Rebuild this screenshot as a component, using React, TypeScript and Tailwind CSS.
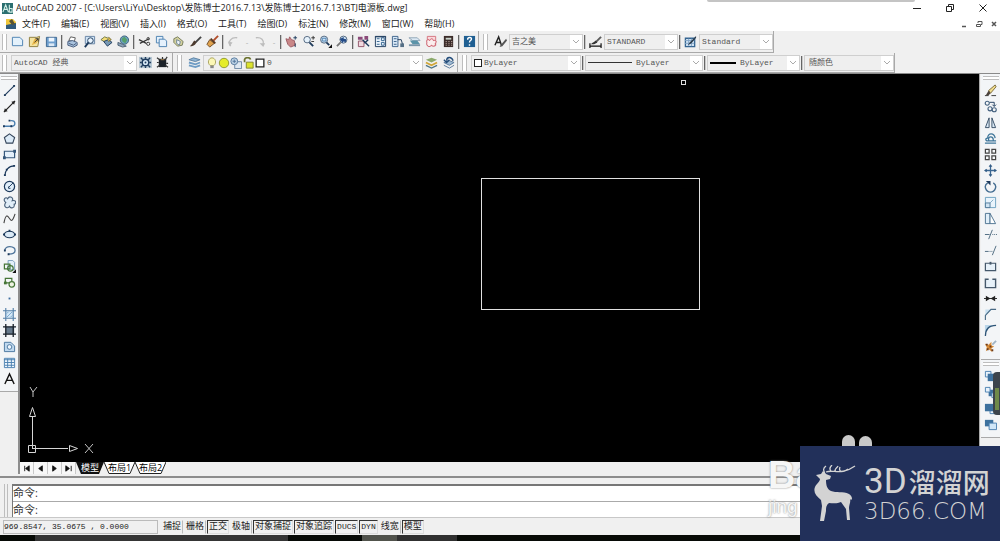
import type { ReactNode } from "react";

const INK = "#1d3a5c";
const BLUE = "#4a7fb0";
const PALE = "#cfe3f5";

// every glyph is drawn on a 14 x 14 grid
const icons: Record<string, ReactNode> = {
    new: <path d="M1.5 2.5h8l3 3v6h-11z" fill="#e4f1fb" stroke={BLUE} />,
    open: <><path d="M1.500 2.500h8l3 -1-2 11h-9z" fill="#f4e3a0" stroke="#8a7a3a" /><path d="M4 11l3-7h5l-3 5z" fill="#eab84a" /><path d="M7 8l4-4M8 4h3v3" stroke="#333" /></>,
    save: <><path d="M1.500 2.500h11v10h-11z" fill="#6f9fce" stroke="#3a658f" /><path d="M4 3h6v4H4z" fill="#eef6ff" /><path d="M4 9h6v3H4z" fill="#dbe8f5" /></>,
    print: <><path d="M3 6l2-4 5 1-1 4z" fill="#fff" stroke="#555" /><path d="M2 7l5-1 5 2v3l-4 2-6-2z" fill="#a9c3de" stroke="#44597a" /><path d="M3 9l5 2 3-2" stroke="#44597a" /></>,
    preview: <><path d="M2.500 1.500h10v8h-10z" fill={PALE} stroke="#6783a3" /><circle cx="8" cy="6" r="3" fill="#eaf5ff" stroke={INK} /><path d="M6 8l-4 5" stroke={INK} strokeWidth="2" /></>,
    publish: <><path d="M1 5l4-3 5 2-4 4z" fill="#f4dd77" stroke="#6b7444" /><path d="M4 7l5-2 4 3-5 4z" fill="#7899b5" stroke={INK} /><path d="M9 2l3 3-3 2" fill="#e7c14b" stroke="#6d652d" /></>,
    web: <><circle cx="8" cy="5.500" r="4.500" fill="#6aa0bd" stroke="#3d617b" /><path d="M5 4l3-2 3 3-2 4-3-2z" fill="#56a06a" /><path d="M1 8l5 2 4 2-4 1-5-2z" fill="#8da4b9" stroke="#4d6072" /></>,
    cut: <><path d="M1 5l8 4M2 9l10-5" stroke="#333" strokeWidth="1.300" /><circle cx="11" cy="9.500" r="1.700" fill="none" stroke="#333" /><circle cx="11" cy="4" r="1.300" fill="none" stroke="#333" /></>,
    copy: <><path d="M1.500 1.500h7v7h-7z" fill="#e5f1fc" stroke={BLUE} /><path d="M4.500 4.500h6l2 2v6h-8z" fill="#e5f1fc" stroke={BLUE} /></>,
    paste: <><path d="M2 4l4-2 6 5-1 4-5 1-4-4z" fill="#d6d3a0" stroke="#72795a" /><path d="M5 5l4 2-1 4-3-2z" fill="#eef4fa" stroke="#6d8294" /></>,
    brush: <><path d="M13 2L7 8" stroke="#444" strokeWidth="2" /><path d="M1 12c2 0 5 0 7-4L6 6c-2 1-2 4-5 6z" fill="#4c3a2e" /></>,
    paint: <><path d="M13 1L8 6" stroke="#b14d2a" strokeWidth="2" /><path d="M4 5l5 4-5 4-3-3z" fill="#e0a24c" stroke="#6d4a26" /><path d="M5 4l5 5" stroke="#5a3820" strokeWidth="2" /></>,
    undo: <><path d="M4 12C0 7 5 2 11 3" fill="none" stroke="#bdbdbd" strokeWidth="1.500" /><path d="M1 7l5 1-3 4z" fill="#bdbdbd" /></>,
    redo: <><path d="M2 3c6-1 9 3 8 7" fill="none" stroke="#bdbdbd" strokeWidth="1.500" /><path d="M6 9l6 0-2 4z" fill="#bdbdbd" /></>,
    pan: <><path d="M1 4l3 1 1-3 2 3 3 1 1 5-5 2-3-3z" fill="#c98788" stroke="#9a5a62" /><path d="M11 1v4M9 3h4M11 9v4" stroke={INK} /></>,
    zoom: <><circle cx="5.500" cy="5" r="3.500" fill="#e6f2fc" stroke="#50657c" /><path d="M8 8l4 4" stroke={INK} strokeWidth="2" /><path d="M10 3h4M12 1v4M10 7h3" stroke="#333" /></>,
    zoomWindow: <><circle cx="5.500" cy="5" r="3.800" fill={PALE} stroke="#50657c" /><path d="M3.500 3.500h4v3h-4z" fill="none" stroke={BLUE} /><path d="M8 8l3 3" stroke={INK} strokeWidth="2" /><path d="M14 10v4h-4z" fill="#111" /></>,
    zoomPrevious: <><circle cx="8" cy="5" r="3.800" fill={PALE} stroke="#50657c" /><path d="M5 8l-4 4" stroke="#777" strokeWidth="2" /><path d="M5 3h3V1l4 4-4 3V6H5z" fill="#234a86" transform="rotate(190 8 5)" /></>,
    properties: <><path d="M1 2h5v3H1zM8 1h4v4H8z" fill="#8c4b7a" /><path d="M1.500 6.500h6v6h-6z" fill="#f0d9df" stroke="#905368" /><path d="M6 5l7 7M8 9l4-4" stroke={INK} strokeWidth="1.500" /></>,
    designCenter: <><path d="M1.500 1.500h11v11h-11z" fill="#eaf3fb" stroke={INK} /><path d="M3 4h3M3 7h3M3 10h3M8 3v3h3V3zM8 8v3h3V8z" fill="none" stroke="#35648f" /><path d="M1 2h12" stroke={INK} /></>,
    palettes: <><path d="M1.500 1.500h6v11h-6z" fill="#d8e8f7" stroke="#3b6189" /><path d="M3 4h3M3 7h3M3 10h3" stroke="#3b6189" /><path d="M7 5h4l2 7" fill="none" stroke={INK} /><path d="M10 9h4v4h-4z" fill="#556f86" /></>,
    sheets: <><path d="M1 3h9l3 3H5z" fill="#dce9f4" stroke="#8fa3b5" /><path d="M2 6l8 0 3 4H5z" fill="#5b93a8" /><path d="M1 11h12" stroke="#7a95a9" strokeWidth="2" /></>,
    markup: <><path d="M2.500 1.500h9v10h-9z" fill="#f9d9dc" stroke="#d4737d" /><path d="M2 8c-1-3 2-4 3-2 1-3 4-2 4 0 3-1 4 2 2 3 1 3-2 4-4 2-2 3-6 1-5-3z" fill="#fbeeee" stroke="#c84f5e" /></>,
    calc: <><path d="M2 1h10v12H2z" fill="#3c2d2a" /><path d="M4 3h6v2H4z" fill="#c9d2ca" /><path d="M4 7h1M7 7h1M10 7h1M4 9h1M7 9h1M10 9h1M4 11h1M7 11h1M10 11h1" stroke="#e0c8c0" /></>,
    help: <><path d="M1 1h12v12H1z" fill="#1f5f92" /><path d="M5 5c0-3 5-3 4 0-1 1-2 1-2 3M7 10v1.500" fill="none" stroke="#fff" strokeWidth="1.500" /></>,
    textStyle: <><path d="M1 11L5 2l3 9M3 8h4" fill="none" stroke="#222" strokeWidth="1.500" /><path d="M13 4L7 11l-1 2 3-1 5-6z" fill="#555" /></>,
    dimStyle: <><path d="M13 2L7 8" stroke="#5c5c5c" strokeWidth="2" /><path d="M2 10c3 0 4 0 7-2L7 6c-1 2-3 2-5 4z" fill="#333" /><path d="M1 12h12M1 9v5M13 9v5" stroke="#111" strokeWidth="1.300" /></>,
    tableStyle: <><path d="M1.500 3.500h10v9h-10z" fill="#cfe1f2" stroke="#356591" strokeWidth="1.400" /><path d="M1 6h10M5 4v8M8 4v8M1 9h10" stroke="#7ea3c6" /><path d="M13 1L6 8l-2 3 4-2 5-6z" fill="#2b3c4c" /></>,
    gear: <><path d="M0 1h14v12H0z" fill="#b9c9d4" /><circle cx="7" cy="7" r="3.500" fill="#d7e8f6" stroke={INK} strokeWidth="1.500" /><path d="M7 1v2M7 11v2M1 7h2M11 7h2M2 2l2 2M12 2l-2 2M2 12l2-2M12 12l-2-2" stroke={INK} strokeWidth="1.500" /><circle cx="7" cy="7" r="1" fill={INK} /></>,
    workspace: <><path d="M3 3h8v9H3z" fill="#1c2228" /><path d="M1 2l3 2M12 1l-2 3M1 7h2M11 8h2M1 12l3-2M13 12l-3-2M7 1v3" stroke="#333" strokeWidth="1.300" /><path d="M5 4h4" stroke="#b78a52" /></>,
    layers: <><path d="M1 4l5-2 7 2-5 2z" fill="#8db4d6" stroke="#5b7f9f" /><path d="M1 7l7 2 5-2M1 10l7 2 5-2" fill="none" stroke="#6f9cc4" strokeWidth="2" /></>,
    layerState: <><path d="M1 4l6-2 6 2-6 3z" fill="#8ba96b" /><path d="M1 7l6 3 6-3" fill="none" stroke="#d0a637" strokeWidth="2" /><path d="M1 10l6 3 6-3" fill="none" stroke="#4f7688" strokeWidth="1.500" /></>,
    layerPrevious: <><path d="M2 7l6-2 5 2-5 3z" fill="#9dbad3" stroke="#58789a" /><path d="M2 10l6 3 5-3" fill="none" stroke="#58789a" /><path d="M12 5C10 0 5 1 5 5M2 4l3 3 3-3" fill="none" stroke="#244d7b" strokeWidth="1.500" /></>,
    bulb: <><path d="M5 10C1 7 3 1 7 1s6 6 2 9z" fill="#fbf7b6" stroke="#a19b54" /><path d="M5 10h4v3H5z" fill="#888" /></>,
    sun: <circle cx="7" cy="7" r="5.500" fill="#e5ec2b" stroke="#88912e" />,
    sunViewport: <><path d="M5.500 5.500h8v8h-8z" fill="#e0e9f2" stroke="#607c9a" /><circle cx="5" cy="5" r="4" fill="#bcd1e3" stroke="#4e7399" /><path d="M3 5h4M5 3v4" stroke="#4e7399" /></>,
    lock: <><path d="M3 6V3c1-3 6-3 7 0" fill="none" stroke="#6c7330" strokeWidth="2" /><path d="M5 6h8v7H5z" fill="#dce22d" stroke="#7a7d2c" /></>,
    line: <><path d="M2 12L12 2" stroke={INK} strokeWidth="1.200" /><path d="M1 11h2v2H1zM11 1h2v2h-2z" fill={INK} /></>,
    xline: <><path d="M1 13L13 1" stroke="#222" strokeWidth="1.300" /><path d="M1 13l4-1-3-3zM13 1L9 2l3 3z" fill="#222" /></>,
    polyline: <><path d="M1 11h8c5 0 5-6 0-6H8" fill="none" stroke={BLUE} strokeWidth="1.500" /><path d="M0 10h2v2H0zM8 10h2v2H8zM6 4h2v2H6z" fill={INK} /></>,
    polygon: <path d="M7 2l5.500 4-2 6h-7l-2-6z" fill="#dcebf8" stroke="#34455a" strokeWidth="1.200" />,
    rectangle: <><path d="M1.500 3.500h11v7h-11z" fill="#e3effa" stroke="#34577b" strokeWidth="1.300" /><path d="M0 9h3v3H0zM11 2h3v3h-3z" fill="#34577b" /></>,
    arc: <><path d="M2 13C2 7 6 2 12 2" fill="none" stroke={INK} strokeWidth="1.200" /><path d="M1 11h2v2H1zM3 5h2v2H3zM11 1h2v2h-2z" fill={INK} /></>,
    circle: <><circle cx="7" cy="7" r="5.500" fill="#dfedf9" stroke={INK} strokeWidth="1.300" /><path d="M6 8l5-5M6 7v2h2" stroke={INK} fill="none" /></>,
    revcloud: <path d="M3 7C-1 4 3 0 5 3c2-4 7-1 5 2 5-1 4 4 2 4 1 4-4 5-5 2-3 4-7 0-4-4z" fill="#e0edf8" stroke="#4a617a" strokeWidth="1.200" />,
    spline: <path d="M1 12C3 1 5 4 7 7s3 4 6-5" fill="none" stroke="#444" strokeWidth="1.200" />,
    ellipse: <><ellipse cx="7" cy="7" rx="5.500" ry="3.500" fill="#dbeaf7" stroke={INK} strokeWidth="1.300" /><path d="M0 6h2v2H0zM12 6h2v2h-2zM6 2h2v2H6z" fill={INK} /></>,
    ellipseArc: <><path d="M2 7c0-6 11-5 11 0 0 3-4 4-7 4" fill="none" stroke="#50759b" strokeWidth="1.400" /><path d="M1 6h2v2H1zM5 10h2v2H5z" fill={INK} /></>,
    insertBlock: <><path d="M5.500.500h5l2 2v8h-7z" fill="#e1effa" stroke="#779bbb" /><path d="M1.500 4.500h6v5h-6z" fill="none" stroke="#457536" strokeWidth="1.300" /><circle cx="8" cy="9" r="3" fill="none" stroke="#457536" strokeWidth="1.300" /><path d="M14 10v4h-4z" fill="#111" /></>,
    makeBlock: <><path d="M2.500 2.500h7v5h-7z" fill="none" stroke="#457536" strokeWidth="1.300" /><circle cx="9.500" cy="9" r="3" fill="#eef3e2" stroke="#457536" strokeWidth="1.300" /><path d="M1 6h3v3H1z" fill="#457536" /></>,
    point: <path d="M6 6h2v2H6z" fill="#3b6c9e" />,
    hatch: <><path d="M2.500 3.500h9v7h-9z" fill="#d3e7f7" /><path d="M3 0v14M11 0v14M0 3h14M0 11h14" stroke="#537fa8" strokeWidth="1.200" /><path d="M4 10l6-6M4 6l2-2M8 10l2-2" stroke="#76a5cb" /></>,
    gradient: <><path d="M3 3h9v8H3z" fill="#66798b" /><path d="M3 0v14M11 0v14M0 3h14M0 11h14" stroke="#171f28" strokeWidth="1.400" /></>,
    region: <><path d="M1.500 2.500h7l4 4v6h-11z" fill="#c0d9ef" stroke="#47759e" /><circle cx="7" cy="7.500" r="2.500" fill="#eff7ff" stroke="#47759e" /></>,
    table: <><path d="M1.500 2.500h11v10h-11z" fill="#eef6fd" stroke={BLUE} /><path d="M1 4h12M5 3v9M9 3v9M2 7h10M2 10h10" stroke={BLUE} /></>,
    text: <path d="M2 13L7 2l5 11M4 9h6" fill="none" stroke="#111" strokeWidth="1.500" />,
    erase: <><path d="M12 1L5 7l2 3 6-7z" fill="#f0dc8c" stroke="#7a6a3c" /><path d="M5 7l2 3-2 2H2z" fill="#4c423a" /><path d="M1 12.500h4M8 12.500h5" stroke="#333" /></>,
    copyObject: <><circle cx="3.500" cy="3.500" r="2.200" fill="none" stroke="#44617f" strokeWidth="1.200" /><circle cx="6.500" cy="9.500" r="2.200" fill="none" stroke="#44617f" strokeWidth="1.200" /><circle cx="11" cy="10.500" r="2.200" fill="none" stroke="#44617f" strokeWidth="1.200" /><path d="M6 2.500h5v4M9 5l2 2 2-2" fill="none" stroke={INK} /></>,
    mirror: <path d="M5.500 2v10.500h-4zM8.500 2v10.500h4z" fill="#dcebf8" stroke="#344b62" />,
    offset: <path d="M1 12h12M13 9.500H3c-2-1-1-3 1-3 0-6 7-6 8 0M5 9c-1-5 5-5 5 0" fill="none" stroke="#3e7599" strokeWidth="1.400" />,
    array: <path d="M1.500 1.500h4v4h-4zM8.500 1.500h4v4h-4zM1.500 8.500h4v4h-4zM8.500 8.500h4v4h-4z" fill="#f7fafc" stroke="#444" strokeWidth="1.300" />,
    move: <><path d="M7 1v12M1 7h12" stroke="#3b6792" strokeWidth="1.400" /><path d="M7 0l2 3H5zM7 14l2-3H5zM0 7l3-2v4zM14 7l-3-2v4z" fill="#315b85" /></>,
    rotate: <><path d="M4 3C-1 6 2 13 7 13s8-7 3-10" fill="none" stroke="#456e92" strokeWidth="1.500" /><path d="M2 1h5v5z" fill={INK} /></>,
    scale: <><path d="M1.500 1.500h11v11h-11z" fill="#e9f4fc" stroke="#6ba0bf" /><path d="M1.500 7.500h5v5h-5z" fill="#d0e4f3" stroke="#4e7796" /><path d="M6 8l4-4" stroke="#7fa7c1" /></>,
    stretch: <><path d="M1.500 1.500h5v11h-5z" fill="#e1eff9" stroke="#4c7190" /><path d="M6.500 1.500l6 11h-6z" fill="#fff" stroke="#4c7190" /></>,
    trim: <path d="M1 7h5M9 7h1M11 7h1M13 7h1M5 12L9 2" stroke="#49677c" />,
    extend: <path d="M1 8h4M6 8h1M8 8h1M9 12l4-10" stroke="#49677c" />,
    breakPoint: <><path d="M1.500 3.500h11v8h-11z" fill="#e7f1f9" stroke="#45586b" strokeWidth="1.300" /><path d="M6 2h2v3H6z" fill="#45586b" /></>,
    breakObject: <path d="M5 3.500H1.500v9h11v-9H9" fill="#e7f1f9" stroke="#45586b" strokeWidth="1.500" />,
    join: <><path d="M0 7h14" stroke="#222" /><path d="M2 4l5 3-5 3zM12 4L7 7l5 3z" fill="#222" /></>,
    chamfer: <><path d="M1.500 1.500h7l-7 7z" fill="#c7dfef" /><path d="M1.500 13V8l6-6.500H13" fill="none" stroke="#496a85" strokeWidth="1.200" /></>,
    fillet: <><path d="M1 1h8L1 9z" fill="#b9d5e9" /><path d="M1.500 13C1.500 6 5 1.500 13 1.500" fill="none" stroke="#2e5577" strokeWidth="1.400" /></>,
    explode: <><path d="M1 4l4 1 3-3v4l3 1-3 2 1 4-4-3-3 2 1-4z" fill="#d88b36" /><path d="M2 4h2v2H2zM6 6h2v2H6zM3 9h2v2H3zM8 10h2v2H8z" fill="#6b3c1e" /><path d="M9 5l4-4" stroke="#9fb4c5" strokeWidth="2" /></>,
    front: <><path d="M1.500 1.500h6v6h-6z" fill="#e8f2fb" stroke={BLUE} /><path d="M4 4h9v8H4z" fill="#3d719e" /></>,
    back: <><path d="M5 4h8v7H5z" fill="#3d719e" /><path d="M1.500 1.500h5v5h-5zM8.500 7.500h5v5h-5z" fill="#e8f2fb" stroke={BLUE} /></>,
    above: <><path d="M6.500 6.500h7v6h-7z" fill="#e8f2fb" stroke={BLUE} /><path d="M1 2h10v8H1z" fill="#3d719e" /></>,
    under: <><path d="M1 2h9v7H1z" fill="#3d719e" /><path d="M5.500 5.500h8v7h-8z" fill="#cfe6f8" stroke={BLUE} /></>,
    square: <path d="M2.500 2.500h9v9h-9z" fill="#fff" stroke="#222" strokeWidth="1.500" />,
};

const Icon = ({ name, className = "size-3" }: { name: string; className?: string }) => (
    <svg viewBox="0 0 14 14" fill="none" className={`${className} shrink-0`} aria-hidden="true">
        {icons[name]}
    </svg>
);

const ToolButton = ({ name }: { name: string }) => (
    <button type="button" aria-label={name} className="flex h-4 w-[17px] shrink-0 items-center justify-center">
        <Icon name={name} className="size-[13px]" />
    </button>
);

const Separator = () => <span className="mx-px h-[14px] w-[2px] shrink-0 border-l border-[#666] bg-[#c9c9c9]" />;

const Grip = () => <span className="mr-1 h-4 w-[5px] shrink-0 border-x border-[#bdbdbd] bg-white" />;

const Caret = () => <span className="w-[10px] shrink-0 text-center text-[8px] text-[#aaa]">-</span>;

const Bar = ({ children }: { children: ReactNode }) => (
    <div className="flex h-full shrink-0 items-center border-r border-b border-[#a9a9a9] pl-1">{children}</div>
);

type ComboProps = { label: string; value: string; className: string; leading?: ReactNode };

const Combo = ({ label, value, className, leading }: ComboProps) => (
    <div className={`flex h-4 shrink-0 items-center border border-[#cfcfcf] bg-[#efefef] pl-[2px] ${className}`}>
        {leading}
        <select
            aria-label={label}
            className="h-full min-w-0 flex-1 appearance-none bg-transparent font-['Liberation_Mono','Noto_Sans_CJK_SC',monospace] text-[8px] text-[#555] outline-none"
        >
            <option>{value}</option>
        </select>
        <span className="flex h-full w-3 items-center justify-center bg-white">
            <svg viewBox="0 0 8 6" className="w-2" aria-hidden="true">
                <path d="M1 1l3 3 3-3" fill="none" stroke="#aaa" />
            </svg>
        </span>
    </div>
);

const standardTools = [
    ["new", "open", "save"],
    ["print", "preview", "publish", "web"],
    ["cut", "copy", "paste", "brush", "paint"],
    ["undo", "redo"],
    ["pan", "zoom", "zoomWindow", "zoomPrevious"],
    ["properties", "designCenter", "palettes", "sheets", "markup", "calc"],
    ["help"],
];

const drawTools = [
    "line", "xline", "polyline", "polygon", "rectangle", "arc", "circle", "revcloud", "spline", "ellipse",
    "ellipseArc", "insertBlock", "makeBlock", "point", "hatch", "gradient", "region", "table", "text",
];

const modifyTools = [
    "erase", "copyObject", "mirror", "offset", "array", "move", "rotate", "scale", "stretch", "trim",
    "extend", "breakPoint", "breakObject", "join", "chamfer", "fillet", "explode",
];

const menus = [
    "文件(F)", "编辑(E)", "视图(V)", "插入(I)", "格式(O)", "工具(T)",
    "绘图(D)", "标注(N)", "修改(M)", "窗口(W)", "帮助(H)",
];

const statusModes = [
    { label: "捕捉", on: false },
    { label: "栅格", on: false },
    { label: "正交", on: true },
    { label: "极轴", on: false },
    { label: "对象捕捉", on: true },
    { label: "对象追踪", on: true },
    { label: "DUCS", on: true },
    { label: "DYN", on: true },
    { label: "线宽", on: false },
    { label: "模型", on: true },
];

const TitleBar = () => (
    <header className="relative bg-white">
        <div className="absolute top-0 right-[85px] h-[2px] w-[208px] rounded-b bg-[#c4c4c4]" />
        <div className="flex h-4 items-center pr-3 pl-[2px]">
            <svg viewBox="0 0 12 12" className="mr-[3px] size-[11px]" aria-hidden="true">
                <path d="M0 0h12v12H0z" fill="#2b6f70" />
                <path d="M1 10l3-8 3 8M8 2v8M8 6h3v4H8M2 7h4" fill="none" stroke="#d5efe8" strokeWidth="1.200" />
            </svg>
            <h1 className="flex-1 truncate text-[9px] leading-4 text-[#222]">
                AutoCAD 2007 - [C:\Users\LiYu\Desktop\发陈博士2016.7.13\发陈博士2016.7.13\BTJ电源板.dwg]
            </h1>
            <div className="flex gap-[23px] text-[#222]">
                <button type="button" aria-label="Minimize">
                    <svg viewBox="0 0 10 10" className="size-[10px]"><path d="M1 5.500h8" stroke="currentColor" /></svg>
                </button>
                <button type="button" aria-label="Restore">
                    <svg viewBox="0 0 10 10" className="size-[10px]"><path d="M1.500 3.500h5v5h-5zM3.500 3V1.500h5v5H7" fill="none" stroke="currentColor" /></svg>
                </button>
                <button type="button" aria-label="Close">
                    <svg viewBox="0 0 10 10" className="size-[10px]"><path d="M1.500 1.500l7 7M8.500 1.500l-7 7" stroke="currentColor" /></svg>
                </button>
            </div>
        </div>
        <div className="flex h-[15px] items-center pl-[5px]">
            <svg viewBox="0 0 12 12" className="size-3" aria-hidden="true">
                <path d="M1 1h7l3 3v4H1z" fill="#f1c83c" />
                <path d="M1 7l10-2v6H1z" fill="#315b7d" />
                <path d="M4 3l3 4 3-1-3-5z" fill="#5a5435" />
            </svg>
            <nav className="ml-[5px] flex flex-1 gap-[11px] text-[9px] leading-[15px] text-[#222]">
                {menus.map((menu) => (
                    <button type="button" key={menu}>{menu}</button>
                ))}
            </nav>
            <div className="flex gap-[7px] pr-[2px] text-[#555]">
                <button type="button" aria-label="Minimize drawing">
                    <svg viewBox="0 0 8 8" className="size-2"><path d="M2 6.500h4" stroke="currentColor" strokeWidth="1.500" /></svg>
                </button>
                <button type="button" aria-label="Restore drawing">
                    <svg viewBox="0 0 8 8" className="size-2"><path d="M1.500 4.500h4v2h-4zM3 3V1.500h4v3H6" fill="none" stroke="currentColor" /></svg>
                </button>
                <button type="button" aria-label="Close drawing">
                    <svg viewBox="0 0 8 8" className="size-2"><path d="M2 2l4 4M6 2L2 6" stroke="currentColor" strokeWidth="1.500" /></svg>
                </button>
            </div>
        </div>
    </header>
);

const Toolbars = () => (
    <div className="border-b border-[#8a8a8a]">
        <div className="flex h-[22px]">
            <div className="flex h-full shrink-0 items-center border-r border-b border-[#a9a9a9] pl-[2px]">
                <span className="mr-[2px] h-4 w-[5px] shrink-0 border-x border-[#bdbdbd] bg-white" />
                {standardTools.map((group, i) => (
                    <div key={i} className="flex items-center">
                        {i > 0 && <Separator />}
                        {group.map((name) => (
                            <div key={name} className="flex items-center">
                                <ToolButton name={name} />
                                {(name === "undo" || name === "redo") && <Caret />}
                            </div>
                        ))}
                    </div>
                ))}
            </div>
            <Bar>
                <Grip />
                <ToolButton name="textStyle" />
                <Combo label="Text style" value="吉之美" className="w-[74px]" />
                <Separator />
                <ToolButton name="dimStyle" />
                <Combo label="Dimension style" value="STANDARD" className="w-[74px]" />
                <Separator />
                <ToolButton name="tableStyle" />
                <Combo label="Table style" value="Standard" className="w-[74px]" />
            </Bar>
        </div>
        <div className="flex h-5">
            <div className="flex h-full shrink-0 items-center border-r border-b border-[#a9a9a9] pr-px pl-[2px]">
                <Grip />
                <Combo label="Workspace" value="AutoCAD 经典" className="w-[126px]" />
                <ToolButton name="gear" />
                <ToolButton name="workspace" />
            </div>
            <Bar>
                <Grip />
                <ToolButton name="layers" />
                <Combo
                    label="Layer"
                    value="0"
                    className="w-[220px]"
                    leading={
                        <span className="mr-px flex">
                            <Icon name="bulb" />
                            <Icon name="sun" />
                            <Icon name="sunViewport" />
                            <Icon name="lock" />
                            <Icon name="square" />
                        </span>
                    }
                />
                <ToolButton name="layerState" />
                <ToolButton name="layerPrevious" />
            </Bar>
            <Bar>
                <Grip />
                <Combo
                    label="Color"
                    value="ByLayer"
                    className="w-[110px]"
                    leading={<span className="mr-[2px] size-2 border border-[#222] bg-white" />}
                />
                <Separator />
                <Combo
                    label="Linetype"
                    value="ByLayer"
                    className="w-[118px]"
                    leading={<span className="mr-1 h-px w-11 bg-[#333]" />}
                />
                <Separator />
                <Combo
                    label="Lineweight"
                    value="ByLayer"
                    className="w-[93px]"
                    leading={<span className="mr-1 h-[2px] w-[26px] bg-black" />}
                />
                <Separator />
                <Combo
                    label="Plot style"
                    value="随颜色"
                    className="w-[90px]"
                    leading={<span className="w-[2px]" />}
                />
            </Bar>
        </div>
    </div>
);

const SideBar = ({ label, tools }: { label: string; tools: string[] }) => (
    <div aria-label={label} role="toolbar" className="flex flex-col items-center border-b border-[#a9a9a9] bg-[#f3f5f7] pb-[5px]">
        <span className="mt-[2px] mb-[2px] h-1 w-4 border-y border-[#bdbdbd] bg-white" />
        {tools.map((name) => <ToolButton key={name} name={name} />)}
    </div>
);

const Canvas = () => (
    <main className="relative min-h-0 flex-1 overflow-hidden bg-black">
        <div className="absolute top-[104px] left-[461px] h-[132px] w-[219px] border border-[#e0e0e0]" />
        <div className="absolute top-[6px] left-[661px] size-[5px] border border-[#ddd]" />
        <svg viewBox="0 0 70 76" className="absolute bottom-px left-[5px] h-[76px] w-[70px]" aria-label="UCS">
            <path d="M3.500 60.500h7v7h-7zM7.500 64V31M7 63.500h36M4.500 31.500l3-9 3 9zM44.500 60.500v6l8-3z" fill="none" stroke="#d6d6d6" />
            <path d="M5 2l3 5 4-5M8 7v5M60 59l8 9M68 59l-8 9" fill="none" stroke="#c4c4c4" />
        </svg>
    </main>
);

const LayoutTabs = () => (
    <div className="flex h-3 items-center bg-[#f0f0f0] text-[9px] leading-3">
        {["M3 2v6M8 2L4 5l4 3z", "M7 2L3 5l4 3z", "M3 2l4 3-4 3z", "M2 2l4 3-4 3zM8 2v6"].map((d) => (
            <button type="button" key={d} aria-label="Scroll layouts" className="flex h-3 w-[14px] items-center justify-center border-r border-[#c9c9c9] bg-[#f7f7f7]">
                <svg viewBox="0 0 10 10" className="size-[9px]"><path d={d} fill="#111" stroke="#111" /></svg>
            </button>
        ))}
        <nav className="flex">
            <a href="#model" className="relative flex h-3 w-[28px] items-center justify-center text-white">
                <svg viewBox="0 0 28 12" className="absolute inset-0 h-3 w-7" aria-hidden="true"><path d="M0 0h28l-5 12H5z" fill="#111" /></svg>
                <span className="relative">模型</span>
            </a>
            <a href="#layout1" className="relative flex h-3 w-[31px] items-center justify-center">
                <svg viewBox="0 0 31 12" className="absolute inset-0 h-3 w-[31px]" aria-hidden="true"><path d="M0 0l5 11.500h21L31 0" fill="#fff" stroke="#222" /></svg>
                <span className="relative">布局1</span>
            </a>
            <a href="#layout2" className="relative flex h-3 w-[31px] items-center justify-center">
                <svg viewBox="0 0 31 12" className="absolute inset-0 h-3 w-[31px]" aria-hidden="true"><path d="M0 0l5 11.500h21L31 0" fill="#fff" stroke="#222" /></svg>
                <span className="relative">布局2</span>
            </a>
        </nav>
    </div>
);

const CommandLine = () => (
    <section className="mt-[2px] border-t-2 border-[#8d8d8d] pt-[6px] text-[11px] text-[#333]">
        <div className="flex">
            <span className="mx-1 w-1 shrink-0 border-x border-[#bdbdbd]" />
            <div className="min-w-0 flex-1 border-t-2 border-l border-[#777] bg-white">
                <p className="h-4 border-b border-[#aaa] leading-[13px]">命令:</p>
                <label className="flex h-[15px] items-center">
                    <span className="leading-[13px]">命令:</span>
                    <input type="text" className="min-w-0 flex-1 bg-transparent outline-none" />
                </label>
            </div>
        </div>
    </section>
);

const StatusBar = () => (
    <footer className="flex h-[18px] items-center border-t border-[#c8c8c8] pl-[3px] font-['Liberation_Mono','Noto_Sans_CJK_SC',monospace] text-[9px] text-[#222]">
        <output className="mr-[3px] h-[14px] w-[155px] border border-[#bbb] text-[8px] leading-3 whitespace-pre">
            969.8547, 35.0675 , 0.0000
        </output>
        {statusModes.map(({ label, on }) => (
            <button
                type="button"
                key={label}
                aria-pressed={on}
                className={`mr-px h-[14px] border px-px leading-3 whitespace-nowrap ${on ? "border-[#333] border-r-[#ddd] border-b-[#ddd]" : "border-transparent border-r-[#bbb]"} ${label.startsWith("D") ? "text-[8px]" : ""}`}
            >
                {label}
            </button>
        ))}
    </footer>
);

const Deer = () => (
    <svg viewBox="0 0 44 57" className="h-[57px] w-11 shrink-0" aria-hidden="true">
        <path
            d="M3 10l5-1 2-3 3 3 5 2-1 3-4 1c0 5 1 9 5 11 5 2 12 0 18 3 2 1 3 3 3 5l-1 1-1-1c1 3-1 6-1 9l1 12h-3l-1-11-5-7c-4 2-9 1-12 1-3 2-3 5-3 8l-2 10H7l2-15-1-6C3 31 0 27 2 22c1-3 5-5 5-8z"
            fill="#d3d3d3"
        />
        <path d="M12 9c-1-3-3-5 1-8M13 7c7-3 15 4 29-6M18 6c-2-2-1-4 1-6M22 6c0-3 2-3 3-5M27 2c-2 5 3 6 8 2" fill="none" stroke="#d3d3d3" strokeWidth="1.300" />
    </svg>
);

const Watermark = () => (
    <div className="pointer-events-none absolute right-0 bottom-0">
        <div className="absolute -top-[11px] left-[42px] flex gap-1">
            <span className="h-5 w-[13px] rounded-full bg-[#c9c9c9]" />
            <span className="mt-px h-5 w-[13px] rounded-full bg-[#c9c9c9]" />
        </div>
        <div className="absolute top-2 -left-8 text-[#f6f6f6] [text-shadow:0_0_2px_#777]">
            <p className="font-['Liberation_Sans',sans-serif] text-[38px] leading-[42px] font-bold">Bai</p>
            <p className="font-['Liberation_Sans',sans-serif] text-[19px] leading-[22px]">jing</p>
        </div>
        <div className="relative flex h-[95px] w-[200px] items-center gap-[7px] bg-[#22305a] pl-[13px] text-[#d3d3d3]">
            <Deer />
            <div className="whitespace-nowrap">
                <p className="flex items-center gap-[2px] leading-[34px]">
                    <span className="font-['Liberation_Sans_Narrow','Roboto',sans-serif] text-[35px]">3D</span>
                    <span className="font-['Noto_Sans_CJK_SC',sans-serif] text-[27px] font-medium">溜溜网</span>
                </p>
                <p className="font-['DejaVu_Sans',sans-serif] text-[23px] leading-6 font-extralight">3D66.COM</p>
            </div>
        </div>
    </div>
);

export default function App() {
    return (
        <div className="relative flex h-screen flex-col overflow-hidden bg-[#f0f0f0] font-['Open_Sans','Noto_Sans_CJK_SC',sans-serif]">
            <TitleBar />
            <Toolbars />
            <div className="flex min-h-0 flex-1">
                <aside className="w-5 shrink-0 border-r-2 border-[#8d8d8d]">
                    <SideBar label="Draw" tools={drawTools} />
                </aside>
                <div className="flex min-w-0 flex-1 flex-col">
                    <Canvas />
                    <LayoutTabs />
                </div>
                <aside className="relative w-[21px] shrink-0 border-l border-[#aaa] pl-px">
                    <SideBar label="Modify" tools={modifyTools} />
                    <SideBar label="Draw order" tools={["front", "back", "above", "under"]} />
                    <div className="absolute top-[298px] right-0 h-[43px] w-[7px] rounded-l bg-[#3c444c] pt-4">
                        <span className="ml-[2px] block h-[22px] w-1 bg-[#6f8a4a]" />
                    </div>
                </aside>
            </div>
            <CommandLine />
            <StatusBar />
            <div className="flex h-[6px] bg-[#070a06]">
                <span className="ml-[35px] w-[253px] bg-[#353535]" />
                <span className="ml-[74px] w-[35px] bg-[#51534c]" />
                <span className="w-[60px] bg-[#303030]" />
            </div>
            <Watermark />
        </div>
    );
}
